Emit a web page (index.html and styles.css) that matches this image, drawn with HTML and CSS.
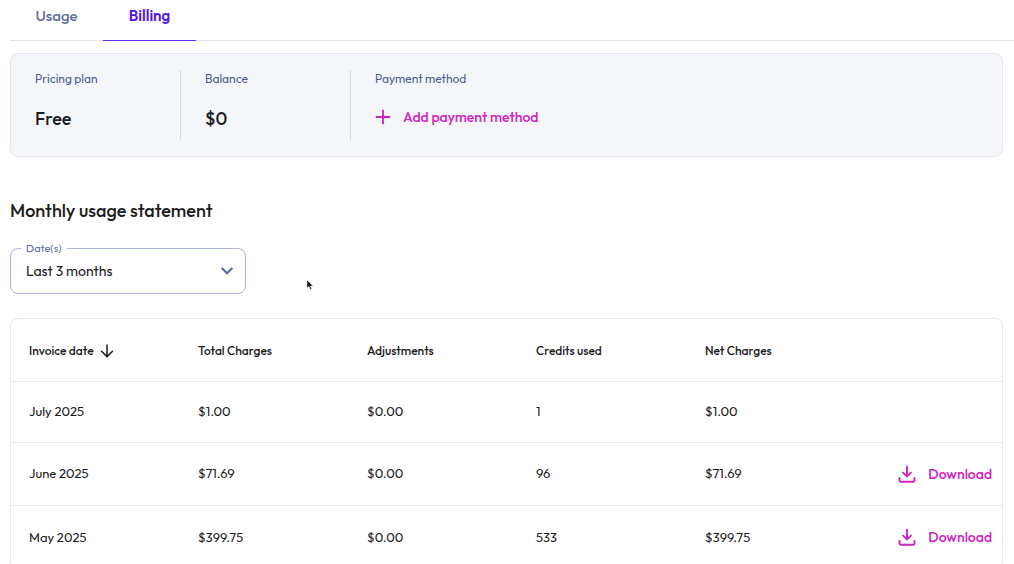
FILE: index.html
```html
<!DOCTYPE html>
<html lang="en">
<head>
<meta charset="utf-8">
<meta name="viewport" content="width=device-width, initial-scale=1">
<title>Billing</title>
<link rel="stylesheet" href="styles.css">
</head>
<body>
<svg class="sprite" aria-hidden="true">
  <symbol id="download" viewBox="0 0 18 18">
    <path d="M9 1.800v9.400M5 7.600l4 3.800 4-3.800M1.500 13v2.500a1.200 1.200 0 0 0 1.200 1.200h12.600a1.200 1.200 0 0 0 1.200-1.200V13" fill="none" stroke="currentColor" stroke-width="1.900" stroke-linecap="round" stroke-linejoin="round"/>
  </symbol>
</svg>
<nav class="tabs">
  <a class="tab" href="#usage">Usage</a>
  <a class="tab tab-active" href="#billing" aria-current="page">Billing</a>
</nav>
<main class="content">
  <section class="summary">
    <div class="summary-item">
      <div class="summary-label">Pricing plan</div>
      <div class="summary-value">Free</div>
    </div>
    <div class="summary-item">
      <div class="summary-label">Balance</div>
      <div class="summary-value">$0</div>
    </div>
    <div class="summary-item">
      <div class="summary-label">Payment method</div>
      <button class="action" type="button">
        <svg class="icon-plus" viewBox="0 0 16 16" aria-hidden="true"><path d="M8 1.500v13M1.500 8h13" stroke="currentColor" stroke-width="1.800" stroke-linecap="round"/></svg>
        Add payment method
      </button>
    </div>
  </section>

  <h2 class="heading">Monthly usage statement</h2>

  <div class="field">
    <label class="field-label" for="dates">Date(s)</label>
    <select class="field-select" id="dates">
      <option>Last 3 months</option>
    </select>
    <svg class="field-chevron" viewBox="0 0 14 14" aria-hidden="true"><path d="M2.500 4.800 7 9.200l4.500-4.400" fill="none" stroke="currentColor" stroke-width="2.200" stroke-linecap="square"/></svg>
  </div>

  <div class="statement">
    <table class="invoices">
      <thead>
        <tr>
          <th><span class="sorted">Invoice date
            <svg class="icon-sort" viewBox="0 0 14 14" aria-hidden="true"><path d="M7 1v11.500M1.500 7.300 7 12.600l5.500-5.300" fill="none" stroke="currentColor" stroke-width="1.500" stroke-linecap="round" stroke-linejoin="round"/></svg></span></th>
          <th>Total Charges</th><th>Adjustments</th><th>Credits used</th><th>Net Charges</th><td></td>
        </tr>
      </thead>
      <tbody>
        <tr><td>July 2025</td><td>$1.00</td><td>$0.00</td><td>1</td><td>$1.00</td><td></td></tr>
        <tr><td>June 2025</td><td>$71.69</td><td>$0.00</td><td>96</td><td>$71.69</td>
          <td class="cell-action"><button class="action" type="button"><svg class="icon-download" aria-hidden="true"><use href="#download"/></svg>Download</button></td></tr>
        <tr><td>May 2025</td><td>$399.75</td><td>$0.00</td><td>533</td><td>$399.75</td>
          <td class="cell-action"><button class="action" type="button"><svg class="icon-download" aria-hidden="true"><use href="#download"/></svg>Download</button></td></tr>
      </tbody>
    </table>
  </div>
</main>
<svg class="pointer" viewBox="0 0 8 12" aria-hidden="true"><path d="M1 1v8l2-1.600 1.400 3 1.300-.6-1.400-2.800H7z" fill="#111" stroke="#ddd" stroke-width=".6"/></svg>
</body>
</html>
```
FILE: styles.css
```css
* { box-sizing: border-box; }
html { scrollbar-width: none; }
body {
  margin: 0;
  background: #fff;
  color: #1c1c1e;
  font: 400 14px/20px Outfit, Lato, sans-serif;
}
.sprite { display: none; }

.tabs {
  display: flex;
  height: 41px;
  margin-left: 10px;
  border-bottom: 1px solid #e4e5f0;
}
.tab {
  width: 93px;
  height: 41px;
  padding-top: 6px;
  text-align: center;
  font-size: 15px;
  font-weight: 500;
  color: #626c9f;
  text-decoration: none;
}
.tab-active {
  color: #5412f0;
  font-weight: 600;
  border-bottom: 1px solid #6a2cf5;
}

.content { padding: 12px 11px 0 10px; }

.summary {
  display: flex;
  padding: 16px 0;
  border: 1px solid #e4e6ef;
  border-radius: 8px;
  background: #f4f6fa;
}
.summary-item {
  flex: 0 0 170px;
  height: 70px;
  padding-left: 24px;
  border-right: 1px solid #d3d7e7;
}
.summary-item:last-child { flex: 1; border-right: 0; }
.summary-label {
  margin-bottom: 16px;
  font-size: 12px;
  line-height: 18px;
  color: #4d5d93;
}
.summary-value { font-size: 18px; line-height: 30px; font-weight: 500; }

.action {
  display: inline-flex;
  align-items: center;
  gap: 12px;
  padding: 0;
  border: 0;
  background: none;
  color: #cf22c0;
  font: inherit;
  font-size: 14px;
  line-height: 26px;
  font-weight: 500;
  white-space: nowrap;
  cursor: pointer;
}
.icon-plus { width: 16px; height: 16px; }
.icon-download { width: 18px; height: 18px; }

.heading {
  margin: 39px 0 22px;
  font-size: 18px;
  line-height: 30px;
  font-weight: 500;
}

.field { position: relative; width: 236px; margin-bottom: 24px; }
.field-label {
  position: absolute;
  top: -7px;
  left: 11px;
  padding: 0 5px;
  background: #fff;
  font-size: 11px;
  line-height: 14px;
  color: #626c9f;
}
.field-select {
  display: block;
  width: 100%;
  height: 46px;
  padding: 0 40px 0 15px;
  border: 1px solid #a9b4d6;
  border-radius: 8px;
  background: #fff;
  color: inherit;
  font: inherit;
  appearance: none;
}
.field-chevron {
  position: absolute;
  top: 16px;
  right: 12px;
  width: 14px;
  height: 14px;
  color: #596aa3;
  pointer-events: none;
}

.statement { border: 1px solid #e6e7f2; border-radius: 8px; }
.invoices {
  width: 100%;
  border-collapse: separate;
  border-spacing: 0;
  table-layout: fixed;
  font-size: 13px;
}
.invoices th, .invoices td {
  width: 169px;
  height: 63px;
  padding: 0 0 2px 18px;
  text-align: left;
  border-bottom: 1px solid #e6e7f2;
}
.invoices th { padding: 2px 0 0 18px; font-size: 12px; font-weight: 500; }
.invoices th:nth-child(6), .invoices td:nth-child(6) { width: auto; }
.invoices .cell-action { padding: 0 10px 0 0; text-align: right; }
.invoices tbody tr:last-child td { border-bottom: 0; }
.invoices tbody tr:first-child td { height: 61px; }
.sorted { display: inline-flex; align-items: center; gap: 6px; }
.icon-sort { width: 14px; height: 14px; }

.pointer { position: absolute; left: 306px; top: 279px; width: 8px; height: 12px; }
```
